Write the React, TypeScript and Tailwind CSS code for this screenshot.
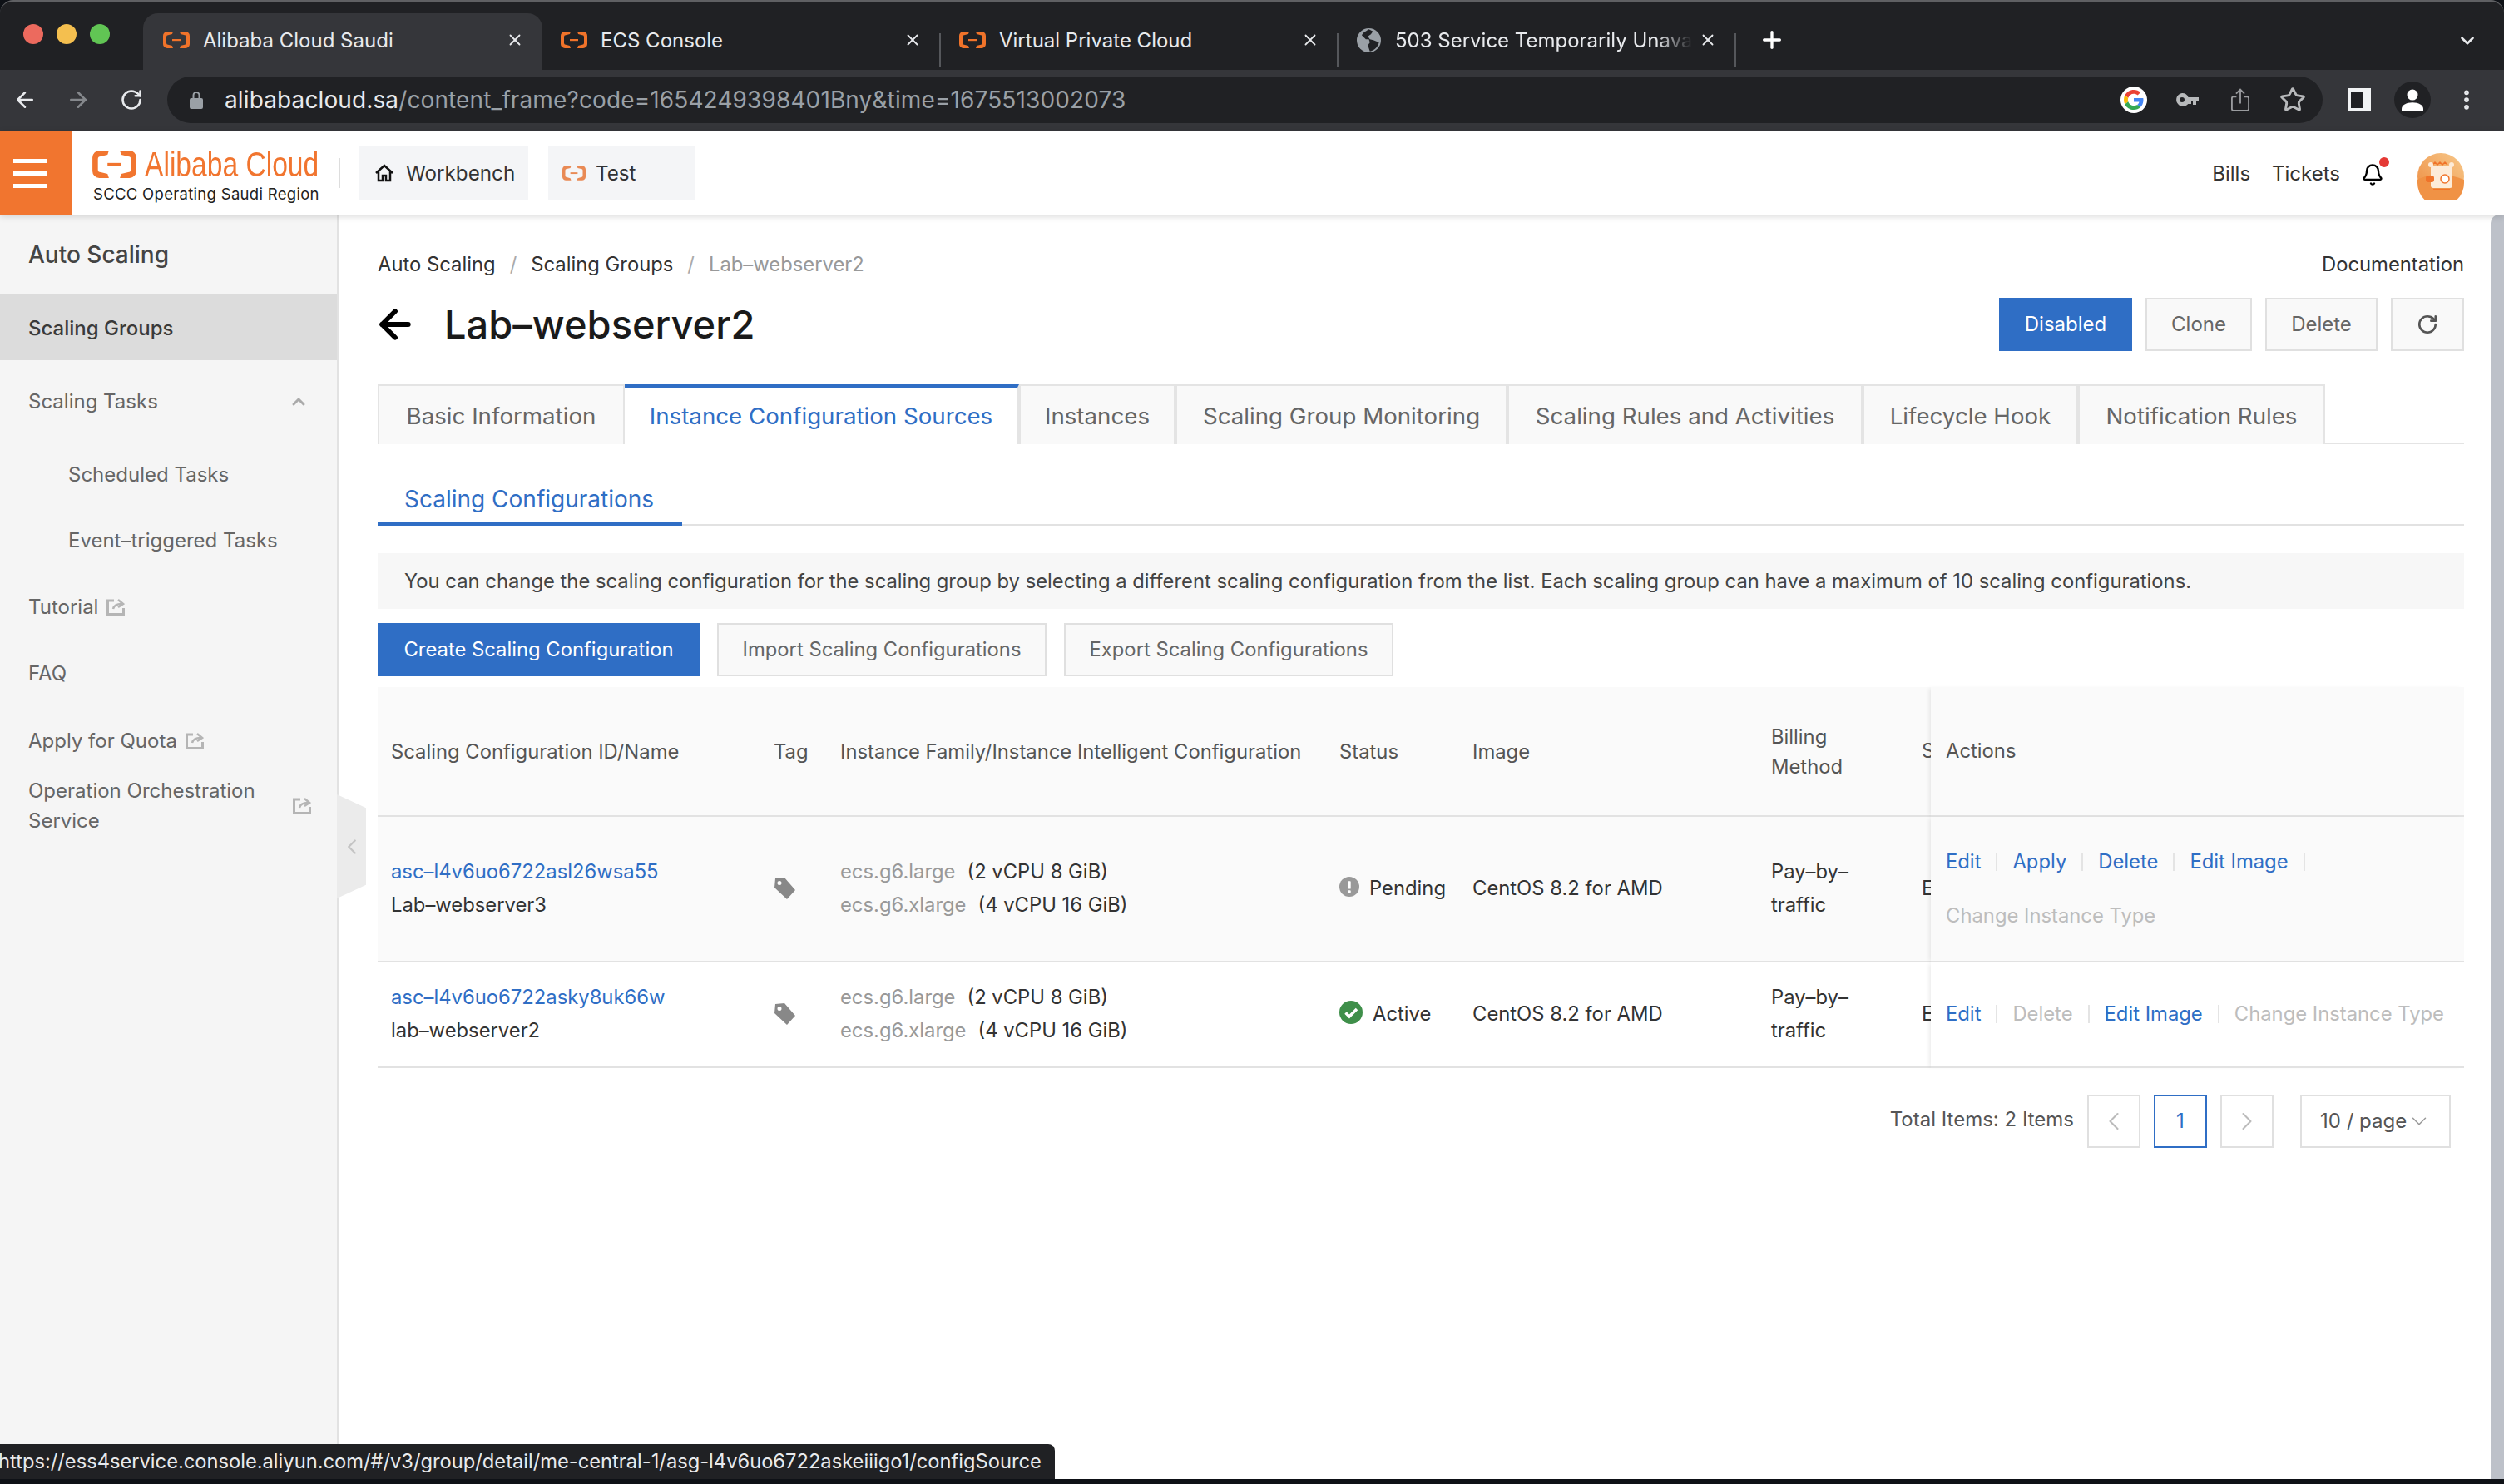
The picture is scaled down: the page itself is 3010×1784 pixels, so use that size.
import { ArrowLeft, ArrowRight, Bell, ChevronDown, ChevronLeft, ChevronRight, ChevronUp, EllipsisVertical, Plus, RotateCw, Star, X } from "lucide-react";

function AliIcon({ className = "" }: { className?: string }) {
  return (
    <svg viewBox="0 0 32 20" className={className} fill="currentColor">
      <path d="M12 0H5a5 5 0 0 0-5 5v10a5 5 0 0 0 5 5h7l-1-3-5-1.200a2 2 0 0 1-2-2V6.200a2 2 0 0 1 2-2L11 3z" />
      <path d="M20 0h7a5 5 0 0 1 5 5v10a5 5 0 0 1-5 5h-7l1-3 5-1.200a2 2 0 0 0 2-2V6.200a2 2 0 0 0-2-2L21 3z" />
      <rect x="11" y="9" width="10" height="2.200" />
    </svg>
  );
}

function Globe() {
  return (
    <svg viewBox="0 0 24 24" className="h-[29px] w-[29px] shrink-0">
      <circle cx="12" cy="12" r="12" fill="#9aa0a6" />
      <path d="M12 1c-3 2-6 3-7 6l4 4 3 0 1 3-2 3 2 6c4-1 8-4 9-9l-5-2-4-1-2-3 3-2 2-3z" fill="#202124" />
    </svg>
  );
}

function BrowserTab({ title, active, globe, fade, width }: { title: string; active?: boolean; globe?: boolean; fade?: boolean; width?: string }) {
  return (
    <div className={active ? "flex h-[68px] w-[480px] items-center rounded-t-[18px] bg-[#35363a] pb-[4px] pl-[24px] pr-[22px]" : "flex h-[68px] items-center pb-[4px] pl-[22px] pr-[21px] " + width}>
      {globe ? <Globe /> : <AliIcon className="h-[20px] w-[32px] shrink-0 text-[#f0732a]" />}
      <span className={fade ? "ml-[17px] flex-1 overflow-hidden whitespace-nowrap pt-[2px] text-[24px] text-[#e8eaed] [mask-image:linear-gradient(to_right,black_88%,transparent)]" : "ml-[16px] flex-1 overflow-hidden whitespace-nowrap pt-[2px] text-[24px] text-[#e8eaed]"}>{title}</span>
      <X size={22} strokeWidth={2} className="ml-[8px] shrink-0 text-[#e8eaed]" />
    </div>
  );
}

function TabDivider() {
  return <div className="mb-[4px] h-[40px] w-[2px] shrink-0 bg-[#55575b]" />;
}

function GoogleG() {
  return (
    <div className="flex h-[32px] w-[32px] items-center justify-center rounded-full bg-white">
      <svg viewBox="0 0 48 48" className="h-[24px] w-[24px]">
        <path fill="#EA4335" d="M24 9.500c3.540 0 6.710 1.220 9.210 3.600l6.850-6.850C35.900 2.380 30.470 0 24 0 14.620 0 6.510 5.380 2.560 13.220l7.980 6.190C12.430 13.720 17.740 9.500 24 9.500z" />
        <path fill="#4285F4" d="M46.980 24.550c0-1.570-.15-3.090-.38-4.550H24v9.020h12.940c-.58 2.960-2.260 5.480-4.780 7.180l7.730 6c4.510-4.180 7.090-10.360 7.090-17.650z" />
        <path fill="#FBBC05" d="M10.530 28.590c-.48-1.450-.76-2.990-.76-4.590s.27-3.140.76-4.590l-7.980-6.190C.92 16.460 0 20.120 0 24c0 3.880.92 7.540 2.560 10.780l7.970-6.190z" />
        <path fill="#34A853" d="M24 48c6.480 0 11.930-2.130 15.890-5.810l-7.730-6c-2.150 1.450-4.920 2.300-8.160 2.300-6.260 0-11.570-4.220-13.470-9.910l-7.980 6.190C6.510 42.620 14.620 48 24 48z" />
      </svg>
    </div>
  );
}

function BrowserChrome() {
  return (
    <div className="h-[158px] shrink-0 overflow-hidden rounded-t-[16px] border-t-2 border-[#5f6063] bg-[#202124]">
      <div className="flex h-[82px] items-end">
        <div className="flex h-[68px] w-[172px] shrink-0 items-start gap-[16px] pl-[28px] pt-[13px]">
          <span className="h-[24px] w-[24px] rounded-full bg-[#ec6a5e]" />
          <span className="h-[24px] w-[24px] rounded-full bg-[#f4bf4f]" />
          <span className="h-[24px] w-[24px] rounded-full bg-[#61c554]" />
        </div>
        <BrowserTab title="Alibaba Cloud Saudi" active />
        <BrowserTab title="ECS Console" width="w-[477px]" />
        <TabDivider />
        <BrowserTab title="Virtual Private Cloud" width="w-[476px]" />
        <TabDivider />
        <BrowserTab title="503 Service Temporarily Unavailable" globe fade width="w-[476px]" />
        <TabDivider />
        <Plus size={32} strokeWidth={2.5} className="mb-[20px] ml-[27px] text-white" />
        <ChevronDown size={26} strokeWidth={2.5} className="mb-[22px] ml-auto mr-[31px] text-[#e8eaed]" />
      </div>
      <div className="flex h-[74px] items-center bg-[#35363a] pb-[2px]">
        <ArrowLeft size={30} strokeWidth={2} className="ml-[15px] text-[#e8eaed]" />
        <ArrowRight size={30} strokeWidth={2} className="ml-[34px] text-[#85888c]" />
        <RotateCw size={28} strokeWidth={2.2} className="ml-[35px] text-[#e8eaed]" />
        <div className="ml-[29px] flex h-[56px] w-[2591px] items-center rounded-full bg-[#202124] pl-[27px]">
          <svg viewBox="0 0 16 22" className="h-[22px] w-[16px] text-[#9aa0a6]" fill="currentColor">
            <path d="M3.500 9V5.500a4.500 4.500 0 0 1 9 0V9h1.500a2 2 0 0 1 2 2v9a2 2 0 0 1-2 2H2a2 2 0 0 1-2-2v-9a2 2 0 0 1 2-2zm2 0h5V5.500a2.500 2.500 0 0 0-5 0z" />
          </svg>
          <span className="ml-[26px] whitespace-nowrap text-[28px] tracking-[0.12px]">
            <span className="text-[#e8eaed]">alibabacloud.sa</span>
            <span className="text-[#9aa0a6]">/content_frame?code=1654249398401Bny&amp;time=1675513002073</span>
          </span>
          <div className="ml-auto flex items-center pr-[20px]">
            <GoogleG />
            <svg viewBox="0 0 28 16" className="ml-[34px] h-[16px] w-[28px] text-[#b7b9bb]" fill="currentColor">
              <path d="M8 0a8 8 0 0 1 7.500 5H28v5h-3v4h-4v-4h-2v3h-3.700A8 8 0 1 1 8 0zm0 5a3 3 0 1 0 0 6 3 3 0 0 0 0-6z" />
            </svg>
            <svg viewBox="0 0 24 30" className="ml-[39px] h-[30px] w-[22px] text-[#9a9c9f]" fill="none" stroke="currentColor" strokeWidth="2">
              <path d="M12 20V2M6.500 7 12 1.500 17.500 7M7 11H3a2 2 0 0 0-2 2v14a2 2 0 0 0 2 2h18a2 2 0 0 0 2-2V13a2 2 0 0 0-2-2h-4" />
            </svg>
            <Star size={32} strokeWidth={2.2} className="ml-[36px] text-[#b7b9bb]" />
          </div>
        </div>
        <div className="ml-[30px] flex h-[28px] w-[28px] items-stretch bg-[#f1f3f4] py-[4px] pl-[4px] pr-[10px]">
          <div className="flex-1 bg-[#202124]" />
        </div>
        <div className="ml-[28px] flex h-[44px] w-[44px] items-center justify-center rounded-full bg-[#202124]">
          <svg viewBox="0 0 24 24" className="h-[26px] w-[26px] text-white" fill="currentColor">
            <circle cx="12" cy="6.500" r="6" />
            <path d="M0 24v-2c0-4 5-7 12-7s12 3 12 7v2z" />
          </svg>
        </div>
        <EllipsisVertical size={30} strokeWidth={2.6} className="ml-[28px] text-[#e8eaed]" />
      </div>
    </div>
  );
}

function Avatar() {
  return (
    <svg viewBox="0 0 56 56" className="h-[56px] w-[56px]">
      <defs>
        <linearGradient id="avatarBg" x1="1" y1="0" x2="0" y2="1">
          <stop offset="0" stopColor="#f7c98b" />
          <stop offset="1" stopColor="#ee8a3e" />
        </linearGradient>
      </defs>
      <circle cx="28" cy="28" r="28" fill="url(#avatarBg)" />
      <path d="M0 32c14-8 38-8 56 0v4A28 28 0 0 1 0 36z" fill="#f09245" />
      <rect x="16" y="15" width="26" height="27" rx="3" fill="#fdebd8" />
      <path d="M18 14l3-3 3 3 3-3 3 3 3-3 3 3" fill="none" stroke="#f0732a" strokeWidth="1.500" />
      <circle cx="16" cy="14" r="3" fill="#fdebd8" />
      <circle cx="41" cy="14" r="3" fill="#fdebd8" />
      <rect x="10" y="27" width="10" height="8" rx="3" fill="#f0732a" />
      <circle cx="33" cy="31" r="5" fill="#fff" stroke="#f0732a" strokeWidth="1.500" />
      <rect x="19" y="43" width="20" height="2" fill="#f0732a" />
    </svg>
  );
}

function AppHeader() {
  return (
    <header className="relative z-10 flex h-[100px] shrink-0 items-center bg-white shadow-[0_2px_8px_rgba(0,0,0,0.16)]">
      <div className="flex h-full w-[86px] flex-col items-start justify-center gap-[10px] bg-[#f1752f] pl-[16px]">
        <span className="h-[5px] w-[40px] bg-white" />
        <span className="h-[5px] w-[40px] bg-white" />
        <span className="h-[5px] w-[40px] bg-white" />
      </div>
      <div className="ml-[24px] w-[272px] pt-[8px]">
        <div className="flex h-[36px] items-center text-[#f1752f]">
          <AliIcon className="h-[33px] w-[55px] shrink-0" />
          <span className="ml-[9px] w-[208px] origin-left scale-x-[0.8] whitespace-nowrap [font-family:'Liberation_Sans',sans-serif] text-[42px] leading-[36px]">Alibaba Cloud</span>
        </div>
        <div className="mt-[5px] whitespace-nowrap pl-[2px] text-[18.500px] leading-[24px] tracking-[0.3px] text-[#222]">SCCC Operating Saudi Region</div>
      </div>
      <div className="ml-[25px] h-[36px] w-[2px] self-center bg-[#ddd]" />
      <div className="ml-[23px] flex h-[64px] w-[203px] items-center bg-[#f4f5f7] pl-[18px] text-[24.200px] text-[#333]">
        <svg viewBox="0 0 24 24" className="h-[24px] w-[24px]" fill="none" stroke="#111" strokeWidth="2.500">
          <path d="M2 12 12 3l10 9M5 10v11h5v-6h4v6h5V10" />
        </svg>
        <span className="ml-[14px] pt-[2px]">Workbench</span>
      </div>
      <div className="ml-[24px] flex h-[64px] w-[176px] items-center bg-[#f4f5f7] pl-[17px] text-[24.200px] text-[#333]">
        <AliIcon className="h-[18px] w-[28px] text-[#e98a55]" />
        <span className="ml-[12px] pt-[2px]">Test</span>
      </div>
      <span className="ml-auto pt-[2px] text-[24px] text-[#333]">Bills</span>
      <span className="ml-[26px] pt-[2px] text-[24px] text-[#333]">Tickets</span>
      <div className="relative ml-[25px] mr-[40px] mt-[4px]">
        <Bell size={28} strokeWidth={2} className="text-black" />
        <span className="absolute -right-[6px] -top-[7px] h-[12px] w-[12px] rounded-full bg-[#e53935]" />
      </div>
      <div className="mr-[48px] mt-[8px]">
        <Avatar />
      </div>
    </header>
  );
}

function ExtIcon() {
  return (
    <svg viewBox="0 0 22 20" className="h-[20px] w-[22px] shrink-0 text-[#b5b5b5]" fill="none" stroke="currentColor" strokeWidth="3">
      <path d="M9 2H1.500v16.500h19V11" />
      <path d="M8 12c1-4 5-6 10-6M14 1l6 5-6 4" strokeWidth="2.500" />
    </svg>
  );
}

function Sidebar() {
  const item = "flex h-[80px] items-center pl-[34px] pt-[2px] text-[24px] text-[#666]";
  return (
    <aside className="relative w-[407px] shrink-0 border-r-2 border-[#e2e2e2] bg-[#f5f5f5]">
      <div className="flex h-[95px] items-center pl-[34px] text-[28px] font-medium text-[#444]">Auto Scaling</div>
      <div className="flex h-[80px] items-center bg-[#dcdcdc] pl-[34px] pt-[4px] text-[24px] font-medium text-[#3a3a3a]">Scaling Groups</div>
      <div className={item + " mt-[9px] justify-between pr-[34px]"}>
        Scaling Tasks
        <ChevronUp size={24} strokeWidth={3} className="text-[#aaa]" />
      </div>
      <div className="mt-[8px] flex h-[80px] items-center pl-[82px] pt-[2px] text-[24px] text-[#666]">Scheduled Tasks</div>
      <div className="-mt-[1px] flex h-[80px] items-center pl-[82px] pt-[2px] text-[24px] text-[#666]">Event–triggered Tasks</div>
      <div className={item + " gap-[10px]"}>
        Tutorial
        <ExtIcon />
      </div>
      <div className={item}>FAQ</div>
      <div className={item + " mt-[1px] gap-[10px]"}>
        Apply for Quota
        <ExtIcon />
      </div>
      <div className="mt-[3px] flex items-center justify-between pl-[34px] pr-[31px] text-[24px] leading-[36px] text-[#666]">
        <span className="w-[290px]">Operation Orchestration Service</span>
        <ExtIcon />
      </div>
      <div className="absolute left-[405px] top-[697px] z-10 flex h-[125px] w-[35px] items-center justify-center bg-[#ebebeb] [clip-path:polygon(0_0,100%_13%,100%_87%,0_100%)]">
        <ChevronLeft size={30} strokeWidth={1.8} className="text-[#c4c4c4]" />
      </div>
    </aside>
  );
}

function PageHeader() {
  return (
    <>
      <div className="mt-[42px] flex h-[36px] items-center text-[23.800px] text-[#333]">
        <span>Auto Scaling</span>
        <span className="mx-[17px] text-[#aaa]">/</span>
        <span>Scaling Groups</span>
        <span className="mx-[17px] text-[#aaa]">/</span>
        <span className="text-[#999]">Lab–webserver2</span>
        <span className="ml-auto">Documentation</span>
      </div>
      <div className="mt-[22px] flex h-[64px] items-center">
        <ArrowLeft size={54} strokeWidth={2.6} className="-ml-[6px] text-black" />
        <h1 className="ml-[32px] text-[47px] font-medium text-[#1a1a1a]">Lab–webserver2</h1>
        <button className="ml-auto h-[64px] w-[160px] bg-[#2f6ec5] text-[24px] text-white">Disabled</button>
        <button className="ml-[16px] h-[64px] w-[128px] border-2 border-[#e0e0e0] bg-[#f9f9f9] text-[24px] text-[#666]">Clone</button>
        <button className="ml-[16px] h-[64px] w-[135px] border-2 border-[#e0e0e0] bg-[#f9f9f9] text-[24px] text-[#666]">Delete</button>
        <button className="ml-[16px] flex h-[64px] w-[88px] items-center justify-center border-2 border-[#e0e0e0] bg-[#f9f9f9]">
          <RotateCw size={26} strokeWidth={2.4} className="text-[#555]" />
        </button>
      </div>
    </>
  );
}

const TABS: [string, string][] = [
  ["Basic Information", "w-[297px]"],
  ["Instance Configuration Sources", "w-[474px]"],
  ["Instances", "w-[188px]"],
  ["Scaling Group Monitoring", "w-[399px]"],
  ["Scaling Rules and Activities", "w-[427px]"],
  ["Lifecycle Hook", "w-[259px]"],
  ["Notification Rules", "w-[297px]"],
];

function MainTabs() {
  return (
    <div className="mt-[40px] flex h-[72px] border-b-2 border-[#e4e4e4]">
      {TABS.map(([label, w], i) =>
        i === 1 ? (
          <div key={label} className={w + " -mb-[2px] flex h-[72px] items-center justify-center border-t-4 border-r-2 border-[#2f6ec5] border-r-[#e4e4e4] bg-white pt-[2px] text-[27.700px] text-[#2f6ec5]"}>
            {label}
          </div>
        ) : (
          <div key={label} className={w + " flex h-[72px] items-center justify-center border-2 border-b-0 border-[#e4e4e4] bg-[#f9f9f9] pt-[4px] text-[27.700px] text-[#666]"}>
            {label}
          </div>
        ),
      )}
    </div>
  );
}

function TagIcon() {
  return (
    <svg viewBox="0 0 26 26" className="h-[26px] w-[26px] text-[#888]" fill="currentColor">
      <path fillRule="evenodd" d="M2 1 13 0l13 15-10 11L1 12zM7 4a2.500 2.500 0 1 0 0 5 2.500 2.500 0 0 0 0-5z" />
    </svg>
  );
}

function ActionLink({ label, muted, last }: { label: string; muted?: boolean; last?: boolean }) {
  return (
    <span className={last ? "flex h-[36px] items-center" : "mr-[18px] flex h-[36px] items-center after:ml-[18px] after:h-[22px] after:w-[2px] after:bg-[#e4e4e4]"}>
      <span className={muted ? "text-[#bdbdbd]" : "text-[#2f6ec5]"}>{label}</span>
    </span>
  );
}

const cell = "border-b-2 border-[#e2e2e2] px-[16px] pb-[1px] align-middle";
const clipCell = "border-b-2 border-[#e2e2e2] pb-[1px] pl-[16px] pr-0 align-middle";
const head = "border-b-2 border-[#e2e2e2] px-[16px] pt-[1px] align-middle font-normal text-left";
const actionsCell = "relative border-b-2 border-[#e2e2e2] pb-[1px] pl-[18px] pr-0 align-middle shadow-[-4px_0_5px_-2px_rgba(0,0,0,0.08)]";

function FamilyCell() {
  return (
    <td className={cell}>
      <div>
        <span className="text-[#999]">ecs.g6.large</span>
        <span className="ml-[14px]">(2 vCPU 8 GiB)</span>
      </div>
      <div>
        <span className="text-[#999]">ecs.g6.xlarge</span>
        <span className="ml-[14px]">(4 vCPU 16 GiB)</span>
      </div>
    </td>
  );
}

function ConfigTable() {
  return (
    <table className="mt-[13px] w-[2508px] table-fixed border-separate border-spacing-0 text-[23.800px] leading-[40px] text-[#333]">
      <colgroup>
        <col className="w-[460px]" />
        <col className="w-[80px]" />
        <col className="w-[600px]" />
        <col className="w-[160px]" />
        <col className="w-[359px]" />
        <col className="w-[181px]" />
        <col className="w-[27px]" />
        <col className="w-[641px]" />
      </colgroup>
      <thead className="bg-[#fafafa] text-[#555]">
        <tr className="h-[156px]">
          <th className={head}>Scaling Configuration ID/Name</th>
          <th className={head}>Tag</th>
          <th className={head + " whitespace-nowrap"}>Instance Family/Instance Intelligent Configuration</th>
          <th className={head}>Status</th>
          <th className={head}>Image</th>
          <th className={head + " leading-[36px]"}>Billing<br />Method</th>
          <th className={clipCell + " text-left font-normal"}><div className="overflow-hidden">S</div></th>
          <th className={actionsCell + " bg-[#fafafa] pl-[16px] text-left font-normal"}>Actions</th>
        </tr>
      </thead>
      <tbody>
        <tr className="h-[175px] bg-[#fafafa]">
          <td className={cell}>
            <div className="text-[#2f6ec5]">asc–l4v6uo6722asl26wsa55</div>
            <div>Lab–webserver3</div>
          </td>
          <td className={cell}><TagIcon /></td>
          <FamilyCell />
          <td className={cell}>
            <div className="flex items-center gap-[12px]">
              <svg viewBox="0 0 28 28" className="-mt-[4px] h-[28px] w-[28px]">
                <circle cx="14" cy="14" r="14" fill="#999" />
                <rect x="12" y="6" width="4" height="11" rx="1" fill="#fff" />
                <rect x="12" y="19" width="4" height="4" rx="1" fill="#fff" />
              </svg>
              Pending
            </div>
          </td>
          <td className={cell}>CentOS 8.2 for AMD</td>
          <td className={cell}>Pay–by–<br />traffic</td>
          <td className={clipCell}><div className="overflow-hidden">E</div></td>
          <td className={actionsCell + " bg-[#fafafa]"}>
            <div className="flex flex-wrap gap-y-[29px]">
              <ActionLink label="Edit" />
              <ActionLink label="Apply" />
              <ActionLink label="Delete" />
              <ActionLink label="Edit Image" />
              <ActionLink label="Change Instance Type" muted last />
            </div>
          </td>
        </tr>
        <tr className="h-[127px] bg-white">
          <td className={cell}>
            <div className="text-[#2f6ec5]">asc–l4v6uo6722asky8uk66w</div>
            <div>lab–webserver2</div>
          </td>
          <td className={cell}><TagIcon /></td>
          <FamilyCell />
          <td className={cell}>
            <div className="flex items-center gap-[12px]">
              <svg viewBox="0 0 28 28" className="-mt-[4px] h-[28px] w-[28px]">
                <circle cx="14" cy="14" r="14" fill="#3f8f4a" />
                <path d="M7.500 14.500 12 19l9-9" fill="none" stroke="#fff" strokeWidth="3.500" />
              </svg>
              Active
            </div>
          </td>
          <td className={cell}>CentOS 8.2 for AMD</td>
          <td className={cell}>Pay–by–<br />traffic</td>
          <td className={clipCell}><div className="overflow-hidden">E</div></td>
          <td className={actionsCell + " bg-white"}>
            <div className="flex flex-wrap gap-y-[29px]">
              <ActionLink label="Edit" />
              <ActionLink label="Delete" muted />
              <ActionLink label="Edit Image" />
              <ActionLink label="Change Instance Type" muted last />
            </div>
          </td>
        </tr>
      </tbody>
    </table>
  );
}

function Pagination() {
  const box = "flex h-[64px] w-[64px] items-center justify-center border-2";
  return (
    <div className="mt-[32px] flex items-center justify-end pr-[16px] text-[24px] text-[#555]">
      <span className="mb-[4px] mr-[16px]">Total Items: 2 Items</span>
      <div className={box + " border-[#e0e0e0]"}><ChevronLeft size={36} strokeWidth={1.4} className="text-[#bbb]" /></div>
      <div className={box + " ml-[16px] border-[#2f6ec5] text-[#2f6ec5]"}>1</div>
      <div className={box + " ml-[16px] border-[#e0e0e0]"}><ChevronRight size={36} strokeWidth={1.4} className="text-[#bbb]" /></div>
      <div className="ml-[32px] flex h-[64px] w-[181px] items-center border-2 border-[#e0e0e0] pl-[22px]">
        <span>10 / page</span>
        <ChevronDown size={30} strokeWidth={1.2} className="text-[#999]" />
      </div>
    </div>
  );
}

export default function App() {
  return (
    <div className="relative flex h-[1784px] w-[3010px] flex-col overflow-hidden bg-[#0e1116] [font-family:Inter,sans-serif]">
      <BrowserChrome />
      <AppHeader />
      <div className="flex min-h-0 flex-1 bg-white">
        <Sidebar />
        <main className="w-[2587px] shrink-0 pl-[47px] pr-[32px]">
          <PageHeader />
          <MainTabs />
          <div className="flex h-[98px] border-b-2 border-[#e2e2e2]">
            <div className="-mb-[2px] flex h-[98px] w-[366px] items-center border-b-4 border-[#2f6ec5] pl-[32px] pt-[37px] text-[28px] text-[#2f6ec5]">Scaling Configurations</div>
          </div>
          <div className="mt-[33px] flex h-[67px] items-center bg-[#f7f7f7] pl-[32px] text-[23.800px] text-[#444]">
            You can change the scaling configuration for the scaling group by selecting a different scaling configuration from the list. Each scaling group can have a maximum of 10 scaling configurations.
          </div>
          <div className="mt-[17px] flex h-[64px] gap-[21px] text-[23.800px]">
            <button className="w-[387px] bg-[#2f6ec5] text-white">Create Scaling Configuration</button>
            <button className="w-[396px] border-2 border-[#e0e0e0] bg-[#f9f9f9] text-[#666]">Import Scaling Configurations</button>
            <button className="w-[396px] border-2 border-[#e0e0e0] bg-[#f9f9f9] text-[#666]">Export Scaling Configurations</button>
          </div>
          <ConfigTable />
          <Pagination />
        </main>
        <div className="w-[16px] shrink-0 rounded-tl-[10px] bg-[#bdc1c9]" />
      </div>
      <div className="h-[6px] shrink-0" />
      <div className="absolute bottom-[6px] left-0 z-20 flex h-[42px] w-[1268px] items-center overflow-hidden rounded-tr-[8px] bg-[#202124] text-[23.700px] text-[#e8eaed]">
        <span className="-ml-[2px] whitespace-nowrap">https://ess4service.console.aliyun.com/#/v3/group/detail/me-central-1/asg-l4v6uo6722askeiiigo1/configSource</span>
      </div>
    </div>
  );
}
